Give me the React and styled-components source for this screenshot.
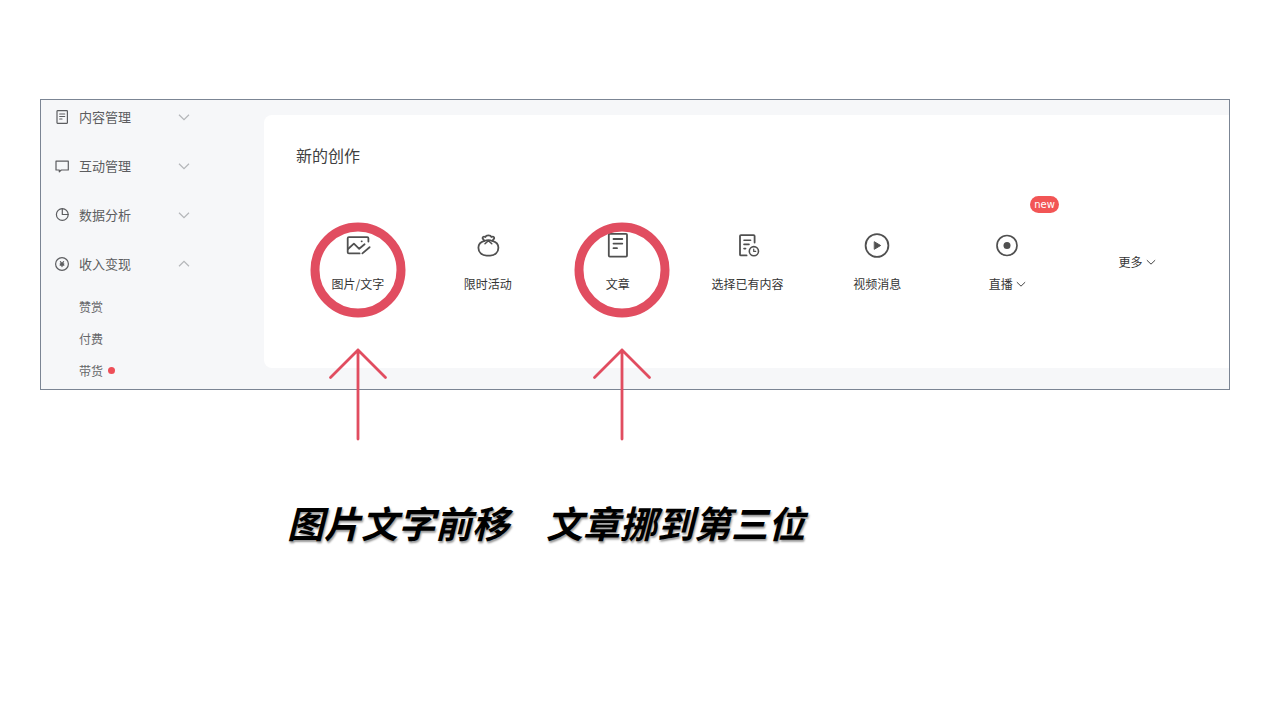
import React from 'react';
import styled, { createGlobalStyle } from 'styled-components';

const GlobalStyle = createGlobalStyle`
  * {
    box-sizing: border-box;
  }
  body {
    margin: 0;
    background: white;
    font-family: 'Noto Sans CJK SC', sans-serif;
  }
  button {
    padding: 0;
    border: none;
    background: none;
    font-family: inherit;
    cursor: pointer;
  }
  a {
    color: inherit;
    text-decoration: none;
  }
  svg {
    display: block;
    flex-shrink: 0;
  }
`;

const Page = styled.div`
  padding: 99px 39px 0 40px;
`;

const Frame = styled.div`
  position: relative;
  display: flex;
  border: 1px solid #7b8594;
  background: #f6f7f9;
`;

/* 左侧菜单 */
const Sidebar = styled.nav`
  flex: 0 0 223px;
  padding: 0 74px 0 14px;
`;

const MenuList = styled.div`
  display: flex;
  flex-direction: column;
  gap: 15px;
`;

const MenuButton = styled.button`
  display: flex;
  align-items: center;
  gap: 10px;
  height: 34px;
  font-size: 13px;
  line-height: 20px;
  color: #5c5d60;
  .label {
    flex: 1;
    text-align: left;
  }
`;

const SubMenu = styled.div`
  display: flex;
  flex-direction: column;
  padding: 9px 0 0 24px;
`;

const SubLink = styled.a`
  display: flex;
  align-items: center;
  gap: 5px;
  height: 32px;
  font-size: 12px;
  color: #66676a;
`;

const Dot = styled.span`
  width: 7px;
  height: 7px;
  border-radius: 50%;
  background: #ee4f58;
`;

/* 新的创作 */
const Main = styled.main`
  flex: 1;
  padding: 15px 0 21px;
`;

const Card = styled.section`
  padding: 28px 27px 75px 29px;
  border-radius: 8px 0 0 8px;
  background: white;
`;

const Title = styled.h2`
  margin: 0 0 64px;
  padding-left: 3px;
  font-size: 16px;
  font-weight: 400;
  line-height: 24px;
  color: #404040;
`;

const CreateGrid = styled.div`
  display: grid;
  grid-template-columns: repeat(7, 1fr);
`;

const CreateButton = styled.button`
  position: relative;
  display: flex;
  flex-direction: column;
  align-items: center;
  justify-content: center;
  gap: 16px;
  color: #505050;
`;

const CreateLabel = styled.span`
  display: flex;
  align-items: center;
  gap: 3px;
  font-size: 12px;
  line-height: 18px;
  color: #353535;
  white-space: nowrap;
`;

const Badge = styled.span`
  position: absolute;
  top: -35px;
  left: calc(50% + 23px);
  padding: 1px 4px 0;
  border-radius: 9px;
  background: #f25555;
  color: white;
  font-family: 'DejaVu Sans', sans-serif;
  font-size: 10px;
  line-height: 16px;
`;

/* 标注：圆圈 + 箭头 */
const Marker = styled.svg`
  position: absolute;
  top: 122px;
  left: ${({ $x }) => $x}%;
  transform: translateX(-50%);
  pointer-events: none;
`;

const Caption = styled.p`
  margin: 105px 0 0 247px;
  font-size: 37px;
  font-style: italic;
  font-weight: 700;
  line-height: 54px;
  color: black;
  text-shadow: 1px 2px 2px rgba(0, 0, 0, 0.4);
`;

const Icon = ({ size = 28, width = 1.8, children }) => (
  <svg
    width={size}
    height={size}
    viewBox={`0 0 ${size} ${size}`}
    fill="none"
    stroke="currentColor"
    strokeWidth={width}
    strokeLinecap="round"
    strokeLinejoin="round"
    aria-hidden="true"
  >
    {children}
  </svg>
);

const Chevron = ({ up, size = 12, color = '#b4b6b9' }) => (
  <svg width={size} height={size} viewBox="0 0 12 12" fill="none" stroke={color} strokeWidth="1.2" aria-hidden="true">
    <path d={up ? 'M1 8.2L6 3.4L11 8.2' : 'M1 3.8L6 8.6L11 3.8'} />
  </svg>
);

const menus = [
  {
    text: '内容管理',
    icon: (
      <>
        <rect x="2" y="0.7" width="10.4" height="12.6" rx="0.5" />
        <path d="M4.7 4H9.7M4.7 6.5H9.7M4.7 9H7" />
      </>
    ),
  },
  {
    text: '互动管理',
    icon: <path d="M1 2.2H13.3V11H6.3L4.3 12.8V11H1Z" />,
  },
  {
    text: '数据分析',
    icon: (
      <>
        <circle cx="7.3" cy="6.5" r="5.9" />
        <path d="M7.3 0.7V6.5H13.2" />
      </>
    ),
  },
  {
    text: '收入变现',
    open: true,
    icon: (
      <>
        <circle cx="7" cy="7" r="6.4" />
        <path d="M5.4 4.6L7 6.6L8.6 4.6M7 6.6V9.6M5.2 6.8H8.8M5.2 8.2H8.8" />
      </>
    ),
  },
];

const subMenus = [{ text: '赞赏' }, { text: '付费' }, { text: '带货', dot: true }];

const creations = [
  {
    text: '图片/文字',
    icon: (
      <>
        <path d="M24.4 10.5V7.3Q24.4 6.1 23.2 6.1H4.9Q3.7 6.1 3.7 7.3V21.2Q3.7 22.4 4.9 22.4H15.6" />
        <path d="M4 18L9.9 12.6L15.2 17.8L20.6 13.3" />
        <path d="M18.4 22.4L25.6 16.2" />
        <path d="M17.6 10.3H17.8" />
      </>
    ),
  },
  {
    text: '限时活动',
    icon: (
      <>
        <path d="M10.4 9.8C6.5 10.8 4.4 13.4 4.4 16.8C4.4 21.4 8 24.6 12.6 24.6H16.2C20.8 24.6 24.4 21.4 24.4 16.8C24.4 13.4 22.3 10.8 18.4 9.8" />
        <path d="M10.4 9.8L8.6 7.4C8.3 5.7 10 5.2 11.4 6C12 3.9 16.8 3.9 17.4 6C18.800 5.200 20.500 5.700 20.200 7.400L18.400 9.800" />
        <path d="M10.800 9.800C12.400 8.800 16.400 8.800 18 9.800M11 12.800L14.400 9.600L17.800 12.800" strokeWidth="1.5" />
      </>
    ),
  },
  {
    text: '文章',
    icon: (
      <>
        <rect x="4.8" y="2.8" width="18.2" height="22.8" rx="1" />
        <path d="M9.5 8H18.3M9.5 12.6H18.3M9.5 17.2H13" />
      </>
    ),
  },
  {
    text: '选择已有内容',
    icon: (
      <>
        <path d="M21.6 11.5V5.1Q21.6 4.1 20.6 4.1H8Q7 4.1 7 5.1V23.4Q7 24.4 8 24.4H13.6" />
        <path d="M11 9.2H17.6M11 13.4H16M11 17.6H12.6" strokeWidth="1.6" />
        <circle cx="20.9" cy="20.2" r="4.6" strokeWidth="1.6" />
        <path d="M20.7 18V20.4H22.7" strokeWidth="1.2" />
      </>
    ),
  },
  {
    text: '视频消息',
    icon: (
      <>
        <circle cx="14" cy="14.5" r="11.4" />
        <path d="M11.6 10.9L17.6 14.5L11.6 18.1Z" fill="currentColor" strokeWidth="1" />
      </>
    ),
  },
  {
    text: '直播',
    more: true,
    badge: 'new',
    icon: (
      <>
        <circle cx="14" cy="14.5" r="10" strokeWidth="1.7" />
        <circle cx="14" cy="14.5" r="3.5" fill="currentColor" stroke="none" />
      </>
    ),
  },
  { text: '更多', more: true },
];

const markers = [26.7, 48.9];

const App = () => {
  return (
    <>
      <GlobalStyle />
      <Page>
        <Frame>
          <Sidebar>
            <MenuList>
              {menus.map((menu) => (
                <MenuButton key={menu.text} type="button" aria-expanded={!!menu.open}>
                  <Icon size={14} width={1.2}>
                    {menu.icon}
                  </Icon>
                  <span className="label">{menu.text}</span>
                  <Chevron up={menu.open} />
                </MenuButton>
              ))}
            </MenuList>
            <SubMenu>
              {subMenus.map((menu) => (
                <SubLink key={menu.text} href="#">
                  {menu.text}
                  {menu.dot && <Dot />}
                </SubLink>
              ))}
            </SubMenu>
          </Sidebar>
          <Main>
            <Card>
              <Title>新的创作</Title>
              <CreateGrid>
                {creations.map((item) => (
                  <CreateButton key={item.text} type="button">
                    {item.icon && <Icon>{item.icon}</Icon>}
                    <CreateLabel>
                      {item.text}
                      {item.more && <Chevron size={10} color="#444" />}
                    </CreateLabel>
                    {item.badge && <Badge>{item.badge}</Badge>}
                  </CreateButton>
                ))}
              </CreateGrid>
            </Card>
          </Main>
          {markers.map((x) => (
            <Marker key={x} $x={x} width="96" height="220" viewBox="0 0 96 220" fill="none" stroke="#e14d60" aria-hidden="true">
              <circle cx="48" cy="48" r="43" strokeWidth="9" />
              <path d="M48 217V128M20.5 155.5L48 128L75.5 155.5" strokeWidth="2.8" strokeLinecap="round" strokeLinejoin="round" />
            </Marker>
          ))}
        </Frame>
        <Caption>图片文字前移　文章挪到第三位</Caption>
      </Page>
    </>
  );
};

export default App;
